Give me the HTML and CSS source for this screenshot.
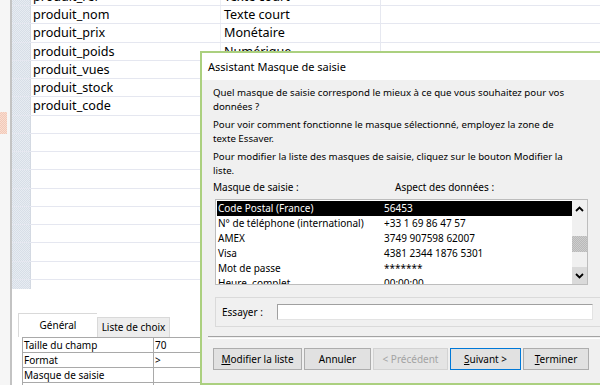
FILE: index.html
```html
<!DOCTYPE html>
<html lang="fr">
<head>
  <meta charset="UTF-8" />
  <title>Assistant Masque de saisie</title>
  <link rel="stylesheet" href="styles.css">
</head>
<body>
<div class="screen">
  <div class="nav"><div class="nav-mark"></div></div>

  <div class="design">
    <div class="grid">
      <div class="row"><div class="sel"></div><div class="cell name">produit_ref</div><div class="cell type">Texte court</div><div class="cell desc"></div></div>
      <div class="row"><div class="sel"></div><div class="cell name">produit_nom</div><div class="cell type">Texte court</div><div class="cell desc"></div></div>
      <div class="row"><div class="sel"></div><div class="cell name">produit_prix</div><div class="cell type">Monétaire</div><div class="cell desc"></div></div>
      <div class="row"><div class="sel"></div><div class="cell name">produit_poids</div><div class="cell type">Numérique</div><div class="cell desc"></div></div>
      <div class="row"><div class="sel"></div><div class="cell name">produit_vues</div><div class="cell type"></div><div class="cell desc"></div></div>
      <div class="row"><div class="sel"></div><div class="cell name">produit_stock</div><div class="cell type"></div><div class="cell desc"></div></div>
      <div class="row"><div class="sel"></div><div class="cell name">produit_code</div><div class="cell type"></div><div class="cell desc"></div></div>
      <div class="row"><div class="sel"></div><div class="cell name"></div><div class="cell type"></div><div class="cell desc"></div></div>
      <div class="row"><div class="sel"></div><div class="cell name"></div><div class="cell type"></div><div class="cell desc"></div></div>
      <div class="row"><div class="sel"></div><div class="cell name"></div><div class="cell type"></div><div class="cell desc"></div></div>
      <div class="row"><div class="sel"></div><div class="cell name"></div><div class="cell type"></div><div class="cell desc"></div></div>
      <div class="row"><div class="sel"></div><div class="cell name"></div><div class="cell type"></div><div class="cell desc"></div></div>
      <div class="row"><div class="sel"></div><div class="cell name"></div><div class="cell type"></div><div class="cell desc"></div></div>
      <div class="row"><div class="sel"></div><div class="cell name"></div><div class="cell type"></div><div class="cell desc"></div></div>
      <div class="row"><div class="sel"></div><div class="cell name"></div><div class="cell type"></div><div class="cell desc"></div></div>
      <div class="row"><div class="sel"></div><div class="cell name"></div><div class="cell type"></div><div class="cell desc"></div></div>
      <div class="row"><div class="sel"></div><div class="cell name"></div><div class="cell type"></div><div class="cell desc"></div></div>
    </div>

    <div class="props">
      <div class="tabs">
        <div class="tab active">Général</div>
        <div class="tab">Liste de choix</div>
      </div>
      <table class="prop-table">
        <tr><td class="prop-name">Taille du champ</td><td>70</td></tr>
        <tr><td class="prop-name">Format</td><td>&gt;</td></tr>
        <tr><td class="prop-name">Masque de saisie</td><td></td></tr>
        <tr><td class="prop-name"></td><td></td></tr>
      </table>
    </div>
  </div>

  <div class="dialog">
    <div class="dlg-title">Assistant Masque de saisie</div>
    <div class="dlg-body">
      <p>Quel masque de saisie correspond le mieux à ce que vous souhaitez pour vos<br>données ?</p>
      <p>Pour voir comment fonctionne le masque sélectionné, employez la zone de<br>texte Essaver.</p>
      <p class="last">Pour modifier la liste des masques de saisie, cliquez sur le bouton Modifier la<br>liste.</p>
      <div class="list-heads"><span class="col-mask">Masque de saisie :</span><span>Aspect des données :</span></div>
      <div class="listbox">
        <div class="list-rows">
          <div class="list-row selected"><span class="col-mask">Code Postal (France)</span><span>56453</span></div>
          <div class="list-row"><span class="col-mask">N° de téléphone (international)</span><span>+33 1 69 86 47 57</span></div>
          <div class="list-row"><span class="col-mask">AMEX</span><span>3749 907598 62007</span></div>
          <div class="list-row"><span class="col-mask">Visa</span><span>4381 2344 1876 5301</span></div>
          <div class="list-row"><span class="col-mask">Mot de passe</span><span>*******</span></div>
          <div class="list-row"><span class="col-mask">Heure, complet</span><span>00:00:00</span></div>
        </div>
        <div class="scrollbar">
          <div class="sb-btn">
            <svg width="9" height="6" viewBox="0 0 9 6"><path d="M1 5 L4.5 1.5 L8 5" fill="none" stroke="#000" stroke-width="1.8"/></svg>
          </div>
          <div class="sb-track"><div class="sb-thumb"></div></div>
          <div class="sb-btn down">
            <svg width="9" height="6" viewBox="0 0 9 6"><path d="M1 1 L4.5 4.5 L8 1" fill="none" stroke="#000" stroke-width="1.8"/></svg>
          </div>
        </div>
      </div>
      <div class="try-group">
        <span class="try-label">Essayer :</span>
        <div class="try-input"></div>
      </div>
    </div>
    <div class="dlg-sep"></div>
    <div class="dlg-buttons">
      <div class="btn btn-modify"><u>M</u>odifier la liste</div>
      <div class="btn btn-cancel">Annuler</div>
      <div class="btn btn-prev disabled">&lt; Précédent</div>
      <div class="btn btn-next default"><u>S</u>uivant &gt;</div>
      <div class="btn btn-finish"><u>T</u>erminer</div>
    </div>
  </div>
</div>
</body>
</html>
```

FILE: styles.css
```css
body {
  margin: 0;
  font-family: 'Noto Sans', sans-serif;
  color: #000;
  background-color: #ffffff;
}
.screen {
  position: relative;
  width: 600px;
  height: 385px;
  overflow: hidden;
  display: flex;
  background-color: #ffffff;
}

/* navigation strip */
.nav {
  width: 10px;
  flex: none;
  background-color: #f6f6f6;
  border-right: 2px solid #c3c3c3;
}
.nav-mark {
  margin-top: 112px;
  width: 7px;
  height: 22px;
  background-color: #f5d3c4;
  background-image: repeating-conic-gradient(#f2c9b8 0 25%, #f9ddd1 0 50%);
  background-size: 2px 2px;
}

/* design grid */
.design {
  flex: 1;
  display: flex;
  flex-direction: column;
}
.grid {
  margin-top: -12.25px;
  height: 301px;
  overflow: hidden;
  flex: none;
}
.row {
  display: flex;
  height: 18.25px;
  box-sizing: border-box;
  border-bottom: 1px solid #e5e7f0;
}
.sel {
  width: 18px;
  flex: none;
  background-color: #dfe5ec;
  background-image: repeating-conic-gradient(#d7dee7 0 25%, #e7ecf2 0 50%);
  background-size: 2px 2px;
  border-right: 1px solid #d3d9e2;
}
.cell {
  font-size: 12.6px;
  line-height: 17px;
  white-space: nowrap;
  overflow: hidden;
}
.name {
  width: 187px;
  padding-left: 2px;
  border-right: 1px solid #eceef4;
}
.type {
  width: 156px;
  padding-left: 3px;
  border-right: 1px solid #e6e8f0;
}
.desc {
  flex: 1;
}

/* field properties */
.props {
  margin-top: 24px;
  padding-left: 6px;
}
.tabs {
  display: flex;
  align-items: flex-end;
  height: 24px;
}
.tab {
  font-size: 10px;
  box-sizing: border-box;
  width: 73px;
  height: 20px;
  line-height: 19px;
  text-align: center;
  white-space: nowrap;
  background-color: #ededed;
  border: 1px solid #d9d9d9;
  border-bottom: none;
}
.tab.active {
  width: 79px;
  height: 24px;
  line-height: 22px;
  background-color: #ffffff;
  border-right: none;
}
.prop-table {
  margin-left: 4px;
  border-collapse: collapse;
  font-size: 10px;
  width: 560px;
}
.prop-table td {
  border: 1px solid #a9a9a9;
  height: 14px;
  line-height: 14px;
  padding: 0 1px;
  white-space: nowrap;
}
.prop-name {
  width: 128px;
}

/* dialog window */
.dialog {
  position: absolute;
  left: 200px;
  top: 51px;
  width: 402px;
  height: 334px;
  box-sizing: border-box;
  border: 2px solid #abd07f;
  border-right: none;
  background-color: #f0f0f0;
  display: flex;
  flex-direction: column;
  font-size: 10px;
}
.dlg-title {
  height: 27px;
  line-height: 27px;
  padding-left: 6px;
  font-size: 11px;
  background-color: #ffffff;
  flex: none;
}
.dlg-body {
  padding: 6px 0 0 11px;
}
.dlg-body p {
  margin: 0 0 4px;
  font-size: 9.7px;
  line-height: 14px;
  white-space: nowrap;
}
.dlg-body p.last {
  margin-bottom: 2px;
}
.list-heads {
  display: flex;
  height: 14px;
  line-height: 14px;
}
.col-mask {
  width: 182px;
  flex: none;
}
.listbox {
  margin: 5px 0 0 2px;
  width: 373px;
  height: 86px;
  box-sizing: border-box;
  border: 1px solid #bdbdbd;
  background-color: #ffffff;
  display: flex;
  overflow: hidden;
}
.list-rows {
  flex: 1;
  padding: 1px 0 0 1px;
}
.list-row {
  display: flex;
  height: 15px;
  line-height: 15px;
  padding-left: 1px;
  white-space: nowrap;
}
.list-row .col-mask {
  width: 166px;
}
.list-row.selected {
  background-color: #000000;
  color: #ffffff;
}
.scrollbar {
  width: 15px;
  flex: none;
  display: flex;
  flex-direction: column;
  background-color: #f0f0f0;
}
.sb-btn {
  height: 17px;
  display: flex;
  align-items: center;
  justify-content: center;
  flex: none;
}
.sb-btn.down {
  background-color: #dadada;
}
.sb-track {
  flex: 1;
  padding-top: 19px;
}
.sb-thumb {
  height: 16px;
  background-color: #c3c3c3;
  background-image: repeating-conic-gradient(#b9b9b9 0 25%, #cdcdcd 0 50%);
  background-size: 2px 2px;
}
.try-group {
  margin: 12px 0 0 2px;
  width: 390px;
  height: 30px;
  box-sizing: border-box;
  border: 1px solid #dadada;
  display: flex;
  align-items: center;
  padding-left: 6px;
}
.try-label {
  width: 55px;
  flex: none;
}
.try-input {
  width: 316px;
  height: 16px;
  box-sizing: border-box;
  background-color: #ffffff;
  border: 1px solid #e3e3e3;
  border-top-color: #a0a0a0;
  border-left-color: #a0a0a0;
}
.dlg-sep {
  margin: 9px 0 0 6px;
  height: 1px;
  border-top: 1px solid #a3a3a3;
  border-bottom: 1px solid #ffffff;
}
.dlg-buttons {
  display: flex;
  gap: 2px;
  padding: 9px 0 0 11px;
}
.btn {
  height: 22px;
  box-sizing: border-box;
  line-height: 20px;
  text-align: center;
  background-color: #e1e1e1;
  border: 1px solid #adadad;
}
.btn u {
  text-decoration-thickness: 1px;
}
.btn-modify { width: 89px; }
.btn-cancel { width: 67px; }
.btn-prev { width: 75px; }
.btn-next { width: 71px; }
.btn-finish { width: 66px; }
.btn.disabled {
  color: #a3a3a3;
  background-color: #e4e4e4;
  border-color: #d3d3d3;
}
.btn.default {
  border-color: #0078d7;
}
```
